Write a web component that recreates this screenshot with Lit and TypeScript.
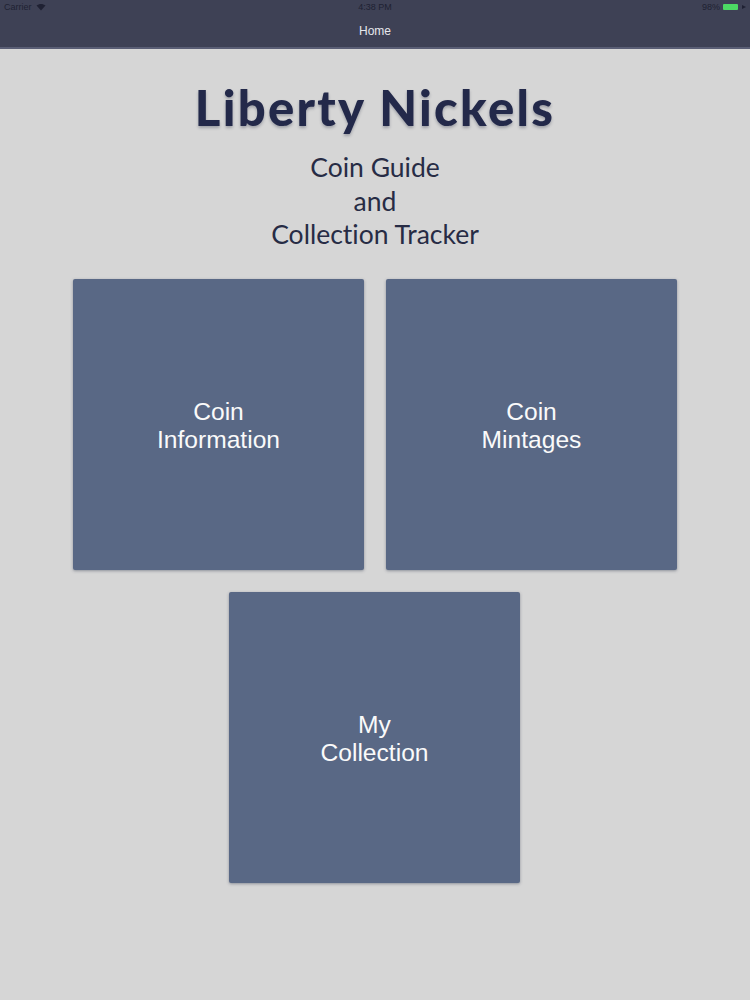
import { LitElement, html, css } from "lit";
import { customElement } from "lit/decorators.js";

@customElement("app-root")
export class AppRoot extends LitElement {
  static styles = css`
    :host { display: block; width: 750px; height: 1000px; background: #d6d6d6; overflow: hidden; font-family: "Liberation Sans", Arial, sans-serif; }
    .nav { height: 47px; background: #3e4155; border-bottom: 2px solid #5a5e75; box-sizing: content-box; display: flex; flex-direction: column; }
    .status { height: 14px; padding: 0 4px 0 4px; display: grid; grid-template-columns: 1fr auto 1fr; align-items: center; font-size: 9px; color: #1f2133; }
    .left { display: flex; align-items: center; gap: 4px; }
    .right { display: flex; align-items: center; justify-content: flex-end; gap: 3px; }
    .battery { width: 15px; height: 6px; background: #4cd964; border-radius: 1px; }
    .caret { width: 0; height: 0; border-top: 2.5px solid transparent; border-bottom: 2.5px solid transparent; border-left: 4px solid #1f2133; margin-left: 1px; }
    .title-bar { text-align: center; color: #e6e7ec; font-size: 12px; line-height: 15px; margin-top: 10px; }
    .main { display: flex; flex-direction: column; align-items: center; padding-top: 30px; }
    h1 { margin: 0; font-family: Lato, sans-serif; font-weight: 900; font-size: 49px; line-height: 56px; color: #23294a; text-shadow: 0 2px 3px rgba(30,35,60,.3); letter-spacing: 2.3px; font-variant-ligatures: none; }
    .sub { margin-top: 16px; font-family: Lato, sans-serif; font-size: 26.5px; line-height: 33.5px; color: #272c45; text-align: center; font-variant-ligatures: none; }
    .grid { margin-top: 27px; display: grid; grid-template-columns: 291px 291px; gap: 22px; justify-content: center; }
    .card { width: 291px; height: 291px; background: #596885; border-radius: 2px; box-shadow: 0 1px 3px rgba(50,60,80,.45); color: #fafafa; display: flex; align-items: center; justify-content: center; text-align: center; font-size: 24.6px; line-height: 28px; padding-top: 4px; box-sizing: border-box; }
    .wide { grid-column: 1 / 3; justify-self: center; margin-right: 1px; }
  `;
  render() {
    return html`
      <div class="nav">
        <div class="status">
          <div class="left"><span>Carrier</span>
            <svg width="10" height="8" viewBox="0 0 10 8"><path d="M5 7.5 0.5 2.6C3 .4 7 .4 9.5 2.6Z" fill="#1f2133"/></svg>
          </div>
          <span>4:38 PM</span>
          <div class="right"><span>98%</span><div class="battery"></div><div class="caret"></div></div>
        </div>
        <div class="title-bar">Home</div>
      </div>
      <div class="main">
        <h1>Liberty Nickels</h1>
        <div class="sub">Coin Guide<br />and<br />Collection Tracker</div>
        <div class="grid">
          <div class="card">Coin<br />Information</div>
          <div class="card">Coin<br />Mintages</div>
          <div class="card wide">My<br />Collection</div>
        </div>
      </div>
    `;
  }
}
